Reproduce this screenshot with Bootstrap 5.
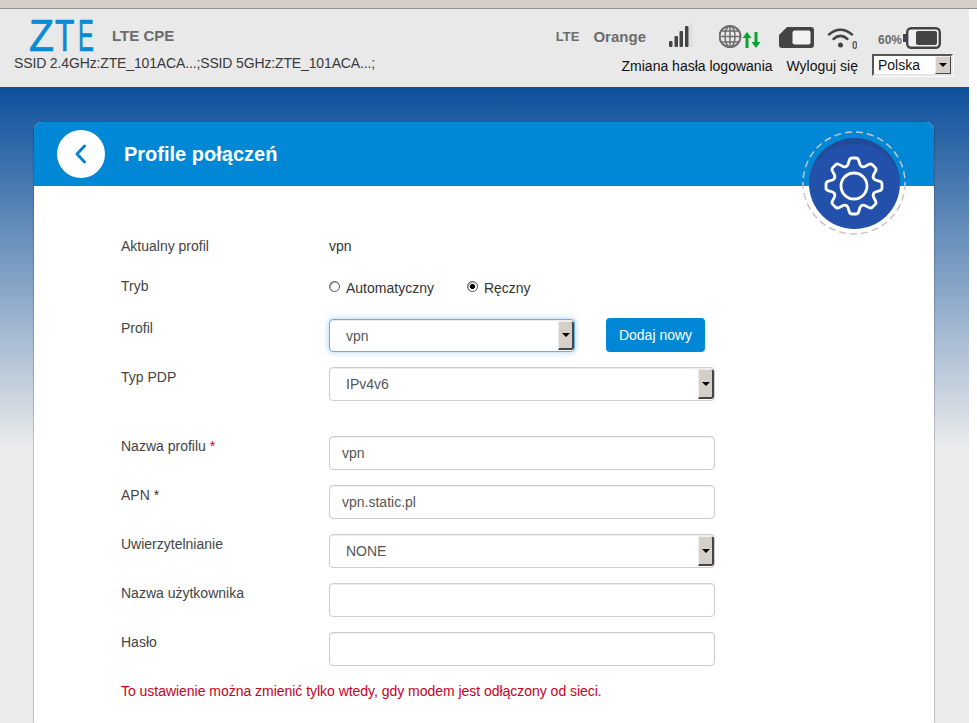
<!DOCTYPE html>
<html lang="pl">
<head>
<meta charset="utf-8">
<title>LTE CPE</title>
<link href="https://cdn.jsdelivr.net/npm/bootstrap@5.3.0/dist/css/bootstrap.min.css" rel="stylesheet">
<style>
html,body{height:100%;overflow:hidden}
body{background:#fff;font-family:"Liberation Sans",Arial,sans-serif;font-size:14px;color:#333;margin:0}
.top-strip{height:9px;background:#d4d0c8;border-bottom:1px solid #8f8f8b}
.page-wrap{margin-right:8px}
.head-bar{height:78px;background:#e9e9e9}
.head-left{padding:10px 0 0 14px}
.logo-row{height:33px;padding-left:15px}
.logo-text{width:67px;height:33px;color:#0a8ad6;font-size:44px;line-height:33px;white-space:nowrap;flex:none;-webkit-text-stroke:.7px #0a8ad6}
.lz,.lt,.le{display:inline-block;height:33px;transform-origin:0 50%;width:0;overflow:visible}
.lz{transform:scaleX(.93);margin-right:26px}
.lt{transform:scaleX(.72);margin-right:23px}
.le{transform:scaleX(.54)}
.cpe{font-weight:700;color:#6a6a70;margin-left:16px;font-size:15px;margin-top:2px}
.ssid{margin-top:3px;line-height:16px;white-space:nowrap;color:#3a3a3a;letter-spacing:-.14px}
.head-right{padding:11px 16px 0 0}
.status-row{height:34px;padding-right:12px;color:#6c6c6c;font-weight:700}
.st-lte{font-size:13px;margin-right:14px}
.st-op{font-size:15px;margin-right:23px}
.ic-sig{margin-right:26px;margin-top:-4px}
.ic-net{margin-right:18px}
.ic-sim{margin-right:13px}
.ic-wifi{margin-right:21px;margin-top:1px}
.st-bat{font-size:12px;margin-top:6px}
.ic-bat{margin-top:1px}
.link-row{height:22px;color:#111}
.link-a{margin-right:14px;margin-top:2px}
.link-b{margin-right:14px;margin-top:2px}
.lang-box{width:81px;height:22px;border:2px solid #555;border-right-color:#e6e6e6;border-bottom-color:#e6e6e6;background:#fff;box-shadow:1px 1px 0 #fff}
.lang-val{flex:1;padding-left:4px;line-height:18px;color:#111;font-size:14px}
.sel-btn{flex:none;width:16px;background:#d4d0c8;border:1px solid;border-color:#eee #444 #444 #eee;display:flex;align-items:center;justify-content:center}
.sel-btn::after{content:"";border:4px solid transparent;border-top:4px solid #000;border-bottom:0}
.grad-bg{height:636px;background:linear-gradient(180deg,#0d4f9b 0,#ececec 363px);padding:35px 35px 0 34px}
.panel{width:900px;height:100%;background:#fff;border-radius:8px 8px 0 0;box-shadow:-1px 0 1px rgba(0,0,0,.18),1px 0 1px rgba(0,0,0,.18)}
.panel-head{height:64px;background:#0088d6;border-radius:8px 8px 0 0;padding-left:23px}
.back-btn{width:48px;height:48px;background:#fff;flex:none}
.panel-title{color:#fff;font-size:20px;font-weight:700;margin-left:19px}
.gear-badge{top:9px;right:28px;width:104px;height:104px}
.gear-ring{top:0;left:0}
.gear-disc{width:91px;height:91px;background:#2350ab;border-top:6px solid #234a98;flex:none}
.panel-body{padding:50px 0 0 87px}
.frm-row{width:594px}
.frm-lab{width:208px;flex:none;color:#444;line-height:20px}
.lab-up{margin-top:-1px}
.row-now{height:20px;margin-bottom:20px}
.row-mode{height:20px;margin-bottom:23px}
.radios{margin-top:4px}
.radio-a{margin-right:33px}
.rad{width:11px;height:11px;border:1px solid #555;border-radius:50%;background:#fff;margin-right:6px;flex:none;margin-top:-4px;box-shadow:inset 1px 1px 1px #aaa}
.rad-on{background:radial-gradient(circle,#000 0 2.2px,#fff 2.8px)}
.fld{height:34px;border:1px solid #ccc;border-radius:4px;background:#fff;box-shadow:inset 0 1px 1px rgba(0,0,0,.075);color:#555;width:386px}
.fld-sel{overflow:hidden;padding:1px 0 1px 1px}
.fld-sel .sel-txt{flex:1;padding-left:15px;line-height:30px}
.fld-sel .sel-btn{width:16px;border-radius:0 3px 3px 0;border-width:1px 2px 2px 1px}
.fld-txt{padding-left:12px;line-height:32px}
.fld-focus{width:246px;height:33px;border-color:#66afe9;box-shadow:inset 0 1px 1px rgba(0,0,0,.075),0 0 6px rgba(102,175,233,.6)}
.add-btn{background:#0088d6;color:#fff;width:99px;height:34px;border-radius:4px;margin-left:31px;margin-top:-1px;font-size:14px;line-height:34px;text-align:center;border:0;padding:0}
.req{color:#e00000}
.req-dark{color:#333}
.row-gap{margin-bottom:15px}
.row-gap-2{margin-bottom:35px}
.hint{color:#c8001e;margin-top:15px;line-height:20px;letter-spacing:-.03px}
</style>
</head>
<body>
<svg width="0" height="0" class="position-absolute">
<defs>
<path id="tooth" d="M-8.04-19.4Q-6.6-20-6-21.5L-4.6-26Q-4-28-2-28L2-28Q4-28 4.6-26L6-21.5Q6.6-20 8.04-19.4" fill="none" stroke="#fff" stroke-width="2.8" stroke-linecap="round"/>
</defs>
</svg>
<div class="top-strip"></div>
<div class="page-wrap">
  <header class="head-bar d-flex justify-content-between">
    <div class="head-left">
      <div class="logo-row d-flex align-items-center">
        <div class="logo-text"><span class="lz">Z</span><span class="lt">T</span><span class="le">E</span></div>
        <div class="cpe">LTE CPE</div>
      </div>
      <div class="ssid">SSID 2.4GHz:ZTE_101ACA...;SSID 5GHz:ZTE_101ACA...;</div>
    </div>
    <div class="head-right">
      <div class="status-row d-flex align-items-center justify-content-end">
        <span class="st-lte">LTE</span>
        <span class="st-op">Orange</span>
        <svg class="ic-sig" width="24" height="24" viewBox="0 0 24 24"><rect x="20" y="0" width="4" height="24" fill="#e0e0e0"/><rect x="0" y="18" width="3.5" height="6" rx="1" fill="#444"/><rect x="5.5" y="13" width="3.5" height="11" rx="1" fill="#444"/><rect x="10.5" y="8" width="3.5" height="16" rx="1" fill="#444"/><rect x="16" y="3" width="3.5" height="21" rx="1" fill="#444"/></svg>
        <svg class="ic-net" width="42" height="24" viewBox="0 0 42 24"><g fill="none" stroke="#6d6d6d" stroke-width="1.5"><circle cx="11" cy="11.5" r="10.5" stroke-width="2"/><ellipse cx="11" cy="11.5" rx="5" ry="10.5"/><path d="M11 1v21M1 11.5h20M2.500 6h17M2.500 17h17"/></g><path d="M28 10v13" stroke="#0aa32e" stroke-width="3"/><path d="M23.500 13l4.500-6 4.500 6z" fill="#0aa32e"/><path d="M37 7v13" stroke="#0aa32e" stroke-width="3"/><path d="M32.500 17h9l-4.500 6z" fill="#0aa32e"/></svg>
        <svg class="ic-sim" width="35" height="21" viewBox="0 0 35 21"><path d="M8 0H32a3 3 0 0 1 3 3V18a3 3 0 0 1-3 3H3a3 3 0 0 1-3-3V8z" fill="#444"/><rect x="13.500" y="3.500" width="18" height="14" rx="2" fill="#f2f2f2"/></svg>
        <svg class="ic-wifi" width="30" height="24" viewBox="0 0 30 24"><g fill="none" stroke="#444" stroke-width="2.500" stroke-linecap="round"><path d="M2 8.500C9 2 18 2 25 8.500"/><path d="M6.500 13C11 9 16 9 20.500 13"/></g><circle cx="13.500" cy="19" r="2.500" fill="#444"/><text x="25" y="23" font-size="10" fill="#555" font-family="Liberation Sans">0</text></svg>
        <span class="st-bat">60%</span>
        <svg class="ic-bat" width="39" height="22" viewBox="0 0 39 22"><path d="M1 7h3v8H1z" fill="#444"/><rect x="5.200" y="1.200" width="32.600" height="19.600" rx="4" fill="#f0f0f0" stroke="#444" stroke-width="2.400"/><rect x="14" y="4" width="21" height="14" rx="2" fill="#444"/></svg>
      </div>
      <div class="link-row d-flex align-items-center justify-content-end">
        <span class="link-a">Zmiana hasła logowania</span>
        <span class="link-b">Wyloguj się</span>
        <div class="lang-box d-flex"><span class="lang-val">Polska</span><span class="sel-btn"></span></div>
      </div>
    </div>
  </header>
  <main class="grad-bg">
    <section class="panel">
      <div class="panel-head d-flex align-items-center position-relative">
        <div class="back-btn rounded-circle d-flex align-items-center justify-content-center">
          <svg width="14" height="20" viewBox="0 0 14 20"><path d="M10.500 2L3 10l7.500 8" fill="none" stroke="#0a84d0" stroke-width="3" stroke-linecap="round" stroke-linejoin="round"/></svg>
        </div>
        <div class="panel-title">Profile połączeń</div>
        <div class="gear-badge position-absolute d-flex align-items-center justify-content-center">
          <svg class="gear-ring position-absolute" width="104" height="104" viewBox="0 0 104 104"><circle cx="52" cy="52" r="51" fill="none" stroke="#c6c6c6" stroke-width="1.500" stroke-dasharray="7 4"/></svg>
          <div class="gear-disc rounded-circle d-flex align-items-center justify-content-center position-relative">
            <svg width="64" height="64" viewBox="-32 -32 64 64">
              <use href="#tooth"/><use href="#tooth" transform="rotate(45)"/><use href="#tooth" transform="rotate(90)"/><use href="#tooth" transform="rotate(135)"/><use href="#tooth" transform="rotate(180)"/><use href="#tooth" transform="rotate(225)"/><use href="#tooth" transform="rotate(270)"/><use href="#tooth" transform="rotate(315)"/>
              <circle r="13" fill="none" stroke="#fff" stroke-width="2.800"/>
            </svg>
          </div>
        </div>
      </div>
      <div class="panel-body">
        <div class="frm-row d-flex align-items-center row-now">
          <div class="frm-lab">Aktualny profil</div><div>vpn</div>
        </div>
        <div class="frm-row d-flex align-items-center row-mode">
          <div class="frm-lab">Tryb</div>
          <div class="d-flex align-items-center radios">
            <span class="rad"></span><span class="radio-a">Automatyczny</span>
            <span class="rad rad-on"></span><span>Ręczny</span>
          </div>
        </div>
        <div class="frm-row d-flex row-gap">
          <div class="frm-lab lab-up">Profil</div>
          <div class="d-flex">
            <div class="fld fld-focus fld-sel d-flex"><span class="sel-txt">vpn</span><span class="sel-btn"></span></div>
            <button class="add-btn" type="button">Dodaj nowy</button>
          </div>
        </div>
        <div class="frm-row d-flex row-gap-2">
          <div class="frm-lab">Typ PDP</div>
          <div class="fld fld-sel d-flex"><span class="sel-txt">IPv4v6</span><span class="sel-btn"></span></div>
        </div>
        <div class="frm-row d-flex row-gap">
          <div class="frm-lab">Nazwa profilu <span class="req">*</span></div>
          <div class="fld fld-txt">vpn</div>
        </div>
        <div class="frm-row d-flex row-gap">
          <div class="frm-lab">APN <span class="req-dark">*</span></div>
          <div class="fld fld-txt">vpn.static.pl</div>
        </div>
        <div class="frm-row d-flex row-gap">
          <div class="frm-lab">Uwierzytelnianie</div>
          <div class="fld fld-sel d-flex"><span class="sel-txt">NONE</span><span class="sel-btn"></span></div>
        </div>
        <div class="frm-row d-flex row-gap">
          <div class="frm-lab">Nazwa użytkownika</div>
          <div class="fld fld-txt"></div>
        </div>
        <div class="frm-row d-flex">
          <div class="frm-lab">Hasło</div>
          <div class="fld fld-txt"></div>
        </div>
        <div class="hint">To ustawienie można zmienić tylko wtedy, gdy modem jest odłączony od sieci.</div>
      </div>
    </section>
  </main>
</div>
</body>
</html>
